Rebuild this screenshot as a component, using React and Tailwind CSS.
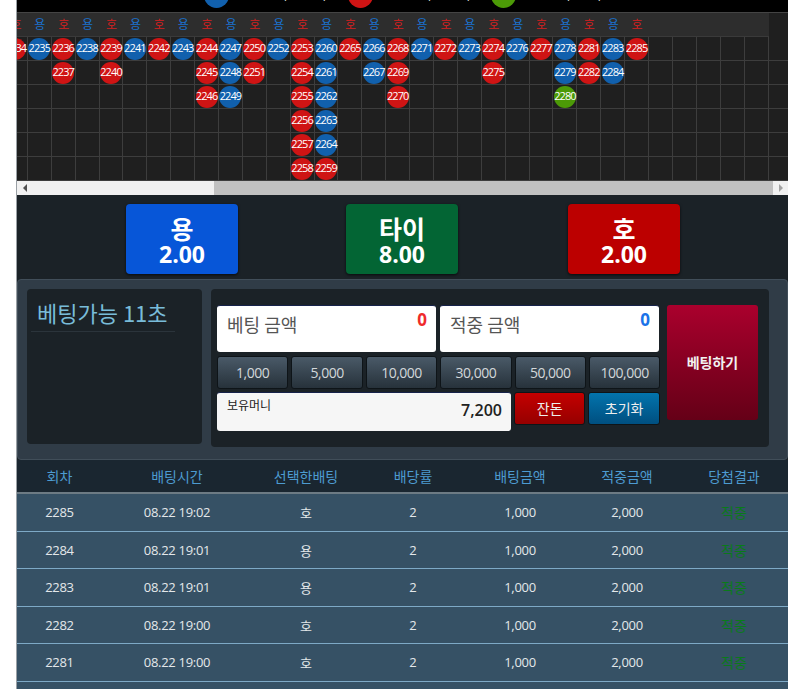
const BLUE = 'bg-[#1160ad]'
const RED = 'bg-[#cf1414]'
const GREEN = 'bg-[#4c9a07]'

// r = 호, b = 용, g = 타이
const beadColumns = [
  [['2234', 'r']],
  [['2235', 'b']],
  [['2236', 'r'], ['2237', 'r']],
  [['2238', 'b']],
  [['2239', 'r'], ['2240', 'r']],
  [['2241', 'b']],
  [['2242', 'r']],
  [['2243', 'b']],
  [['2244', 'r'], ['2245', 'r'], ['2246', 'r']],
  [['2247', 'b'], ['2248', 'b'], ['2249', 'b']],
  [['2250', 'r'], ['2251', 'r']],
  [['2252', 'b']],
  [['2253', 'r'], ['2254', 'r'], ['2255', 'r'], ['2256', 'r'], ['2257', 'r'], ['2258', 'r']],
  [['2260', 'b'], ['2261', 'b'], ['2262', 'b'], ['2263', 'b'], ['2264', 'b'], ['2259', 'r']],
  [['2265', 'r']],
  [['2266', 'b'], ['2267', 'b']],
  [['2268', 'r'], ['2269', 'r'], ['2270', 'r']],
  [['2271', 'b']],
  [['2272', 'r']],
  [['2273', 'b']],
  [['2274', 'r'], ['2275', 'r']],
  [['2276', 'b']],
  [['2277', 'r']],
  [['2278', 'b'], ['2279', 'b'], ['2280', 'g']],
  [['2281', 'r'], ['2282', 'r']],
  [['2283', 'b'], ['2284', 'b']],
  [['2285', 'r']],
]

const emptyColumns = Array.from({ length: 6 }, () => [])
const columns = [...beadColumns, ...emptyColumns]
const rows = [0, 1, 2, 3, 4, 5]

const chips = ['1,000', '5,000', '10,000', '30,000', '50,000', '100,000']

const history = [
  ['2285', '08.22 19:02', '호'],
  ['2284', '08.22 19:01', '용'],
  ['2283', '08.22 19:01', '용'],
  ['2282', '08.22 19:00', '호'],
  ['2281', '08.22 19:00', '호'],
  ['2280', '08.22 18:59', '용'],
]

const headers = ['회차', '배팅시간', '선택한배팅', '배당률', '배팅금액', '적중금액', '당첨결과']
const tableCols = 'grid grid-cols-[85px_150px_108px_106px_108px_106px_108px] text-center'

function Bead({ num, kind }) {
  const color = kind === 'r' ? RED : kind === 'b' ? BLUE : GREEN
  return (
    <div className={`w-[22px] h-[22px] rounded-full ${color} flex items-center justify-center text-white text-[11px] tracking-[-0.9px] font-['Open_Sans',sans-serif]`}>
      {num}
    </div>
  )
}

function LegendItem({ color, width, gap, text }) {
  return (
    <div className={`flex items-end ${width}`}>
      <div className={`w-[25px] h-[25px] rounded-full shrink-0 ${color} mb-[4px]`} />
      <div className={`${gap} text-[14px] leading-[18px] text-white mb-[11px] whitespace-nowrap`}>{text}</div>
    </div>
  )
}

function BetButton({ label, color, extra = '' }) {
  return (
    <button className={`w-[112px] h-[70px] rounded-[4px] ${color} ${extra} text-white font-bold flex flex-col items-center pt-[8px] shadow-[0_1px_3px_rgba(0,0,0,0.7)]`}>
      <span className="text-[25px] leading-[32px]">{label}</span>
      <span className="text-[23px] leading-[20px] font-['Open_Sans',sans-serif]">{label === '타이' ? '8.00' : '2.00'}</span>
    </button>
  )
}

function AmountBox({ label, value, valueColor, width }) {
  return (
    <div className={`${width} h-[47px] bg-white rounded-[3px] flex justify-between pl-[10px] pr-[9px] border-t border-[#16224a]`}>
      <span className="text-[18px] leading-[37px] text-[#555]">{label}</span>
      <span className={`text-[17px] leading-[28px] font-bold font-['Open_Sans',sans-serif] ${valueColor}`}>{value}</span>
    </div>
  )
}

export default function App() {
  return (
    <div className="h-[689px] overflow-hidden bg-white pl-4 pr-3 font-['Noto_Sans_CJK_KR','Noto_Sans',sans-serif]">
      <div className="h-full border-l border-[#9aa0a5]">
        {/* legend, cut off by the page top */}
        <div className="h-[12px] bg-black overflow-hidden flex items-end pl-[187px]">
          <LegendItem color={BLUE} width="w-[144px]" gap="ml-[37px]" text="용 (103회)" />
          <LegendItem color={RED} width="w-[143px]" gap="ml-[37px]" text="호 (103회)" />
          <LegendItem color={GREEN} width="w-[143px]" gap="ml-[20px]" text="타이 (14회)" />
        </div>

        {/* road map */}
        <div className="overflow-hidden bg-[#1f1f1f] border-t border-[#444]">
          <div className="flex h-[24px] bg-[#2d2d2d] w-[752px] overflow-hidden border-b border-[#3a3a3a]">
            <div className="flex ml-[-13px]">
              {beadColumns.map((col, i) => (
                <div
                  key={i}
                  className={`w-[23.9px] shrink-0 text-center text-[12px] leading-[22px] ${col[0][1] === 'r' ? 'text-[#d42020]' : 'text-[#1a72d0]'}`}
                >
                  {col[0][1] === 'r' ? '호' : '용'}
                </div>
              ))}
            </div>
          </div>
          <div className="flex ml-[-13px]">
            {columns.map((col, c) => (
              <div key={c} className="w-[23.9px] shrink-0 border-r border-[#3d3d3d]">
                {rows.map((r) => (
                  <div key={r} className="h-[24px] border-b border-[#3d3d3d] flex items-center justify-center">
                    {col[r] && <Bead num={col[r][0]} kind={col[r][1]} />}
                  </div>
                ))}
              </div>
            ))}
          </div>
        </div>

        {/* horizontal scrollbar */}
        <div className="h-[14px] bg-[#f1f1f1] flex items-center">
          <div className="w-[16px] flex justify-center">
            <div className="w-0 h-0 border-y-[4px] border-y-transparent border-r-[4px] border-r-[#505050]" />
          </div>
          <div className="flex-1 h-full pl-[181px]">
            <div className="h-full bg-[#c1c1c1]" />
          </div>
          <div className="w-[15px] flex justify-center">
            <div className="w-0 h-0 border-y-[4px] border-y-transparent border-l-[4px] border-l-[#a3a3a3]" />
          </div>
        </div>

        {/* odds buttons */}
        <div className="h-[84px] bg-[#1b2227] pt-[9px] flex pl-[109px] gap-[108px]">
          <BetButton label="용" color="bg-[#0756d8]" />
          <BetButton label="타이" color="bg-[#036534]" />
          <BetButton label="호" color="bg-[#bc0000]" extra="ml-[2px]" />
        </div>

        {/* betting panel */}
        <div className="bg-[#1b2227]">
          <div className="h-[181px] bg-[#303c47] rounded-[4px] border border-[#414e59] p-[9px] flex gap-[9px]">
            <div className="w-[175px] h-[155px] bg-[#1b2227] rounded-[4px] px-[4px] pt-[7px]">
              <div className="text-[22px] leading-[32px] pl-[6px] pb-[3px] text-[#79bcd9] border-b border-[#2b343b] mr-[23px] whitespace-nowrap">베팅가능 11초</div>
            </div>
            <div className="w-[558px] h-[158px] bg-[#1b2227] rounded-[4px] flex pl-[6px] pt-[16px]">
              <div className="w-[444px]">
                <div className="flex gap-[4px]">
                  <AmountBox label="베팅 금액" value="0" valueColor="text-[#ef2b2b]" width="w-[219px]" />
                  <AmountBox label="적중 금액" value="0" valueColor="text-[#1a73e8]" width="w-[219px]" />
                </div>
                <div className="flex gap-[3px] mt-[4px]">
                  {chips.map((chip) => (
                    <button key={chip} className="w-[71.4px] h-[33px] rounded-[3px] border border-[#0e1418] bg-gradient-to-b from-[#4a5a68] to-[#27323b] text-[#d3d7da] text-[14px] tracking-[-0.5px] font-['Open_Sans',sans-serif]">
                      {chip}
                    </button>
                  ))}
                </div>
                <div className="flex gap-[3px] mt-[3px]">
                  <div className="w-[294px] h-[39px] bg-[#f6f6f6] rounded-[3px] flex justify-between pl-[10px] pr-[9px] border-t border-[#16224a]">
                    <span className="text-[12px] leading-[24px] text-[#222]">보유머니</span>
                    <span className="text-[16px] leading-[35px] font-semibold text-[#222] font-['Open_Sans',sans-serif]">7,200</span>
                  </div>
                  <button className="w-[71.4px] h-[33px] rounded-[3px] border border-[#0e1418] bg-gradient-to-b from-[#c40000] to-[#960000] text-[#eee] text-[14px]">잔돈</button>
                  <button className="w-[71.4px] h-[33px] rounded-[3px] border border-[#0e1418] bg-gradient-to-b from-[#0374ad] to-[#004f80] text-[#eee] text-[14px]">초기화</button>
                </div>
              </div>
              <button className="w-[91px] h-[115px] ml-[6px] rounded-[3px] bg-gradient-to-b from-[#aa002d] to-[#650017] text-[#f2f2f2] text-[14px] font-bold">
                베팅하기
              </button>
            </div>
          </div>
        </div>

        {/* history table */}
        <div className={`${tableCols} h-[34px] bg-[#1a2630] border-b-2 border-[#6d7b84] text-[14px] leading-[32px] text-[#4d9bd1]`}>
          {headers.map((h) => (
            <div key={h}>{h}</div>
          ))}
        </div>
        {history.map((row) => (
          <div key={row[0]} className={`${tableCols} h-[37.6px] bg-[#365165] border-b border-[#7ea9c6] text-[13px] leading-[37px] text-[#e4e8ea]`}>
            <div className="font-['Open_Sans',sans-serif] tracking-[-0.3px]">{row[0]}</div>
            <div className="font-['Open_Sans',sans-serif] tracking-[-0.3px]">{row[1]}</div>
            <div>{row[2]}</div>
            <div className="font-['Open_Sans',sans-serif]">2</div>
            <div className="font-['Open_Sans',sans-serif] tracking-[-0.3px]">1,000</div>
            <div className="font-['Open_Sans',sans-serif] tracking-[-0.3px]">2,000</div>
            <div className="text-[14px] text-[#0a7a1a]">적중</div>
          </div>
        ))}
      </div>
    </div>
  )
}
